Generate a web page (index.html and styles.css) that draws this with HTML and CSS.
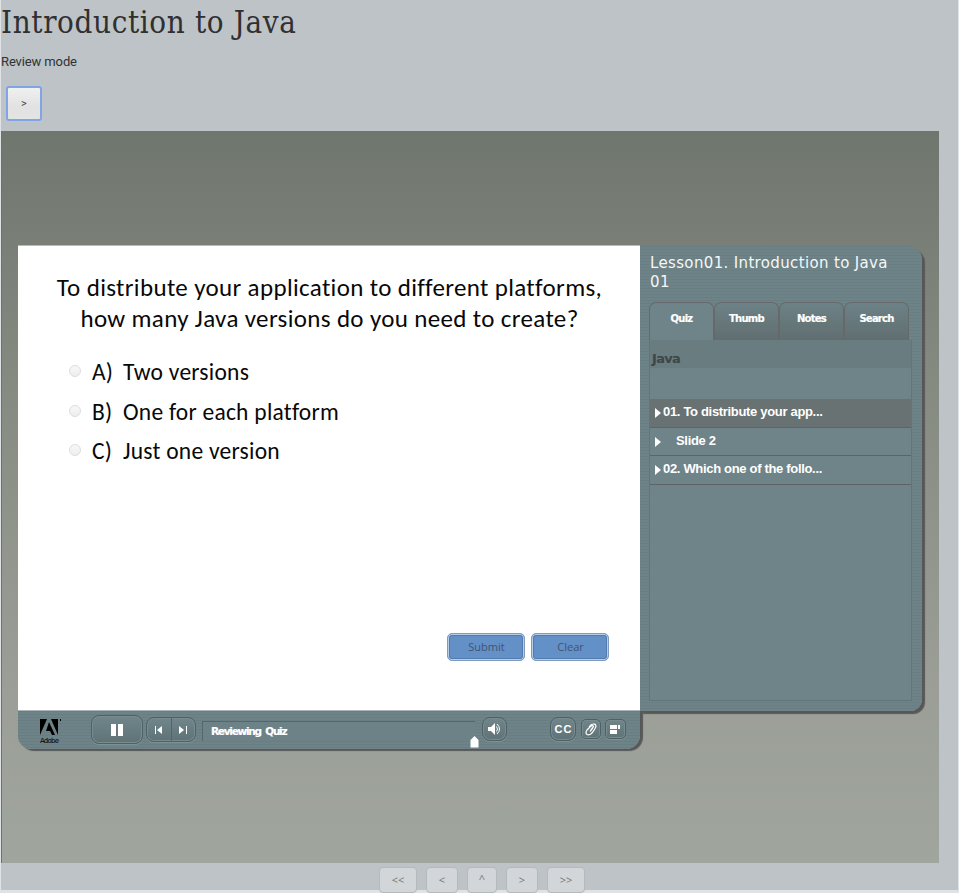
FILE: index.html
```html
<!DOCTYPE html>
<html lang="en">
<head>
<meta charset="utf-8">
<title>Introduction to Java</title>
<link rel="stylesheet" href="styles.css">
</head>
<body>
<main class="page">
  <h1><span>Introduction to Java</span></h1>
  <p class="mode">Review mode</p>
  <button class="next">&gt;</button>
  <section class="stage">
    <div class="player">
      <div class="lesson">
        <div class="slide">
          <h2>To distribute your application to different platforms,<br>how many Java versions do you need to create?</h2>
          <ul class="answers">
            <li><i class="radio"></i><span class="letter">A)</span><span>Two versions</span></li>
            <li><i class="radio"></i><span class="letter">B)</span><span>One for each platform</span></li>
            <li><i class="radio"></i><span class="letter">C)</span><span>Just one version</span></li>
          </ul>
          <div class="actions"><button>Submit</button><button>Clear</button></div>
        </div>
        <div class="controls">
          <div class="logo">
            <svg width="22" height="17" viewBox="0 0 22 17"><path d="M0 0h7L0 16zM11 0h7v16zM9 3l6 13h-3l-2-4H6z"/><path d="M20 0h1v2h-1z"/></svg>
            <span>Adobe</span>
          </div>
          <div class="ctl pause"><svg width="12" height="12"><path d="M0 0h5v12H0zM7 0h5v12H7z" fill="#fff"/></svg></div>
          <div class="ctl skip">
            <span><svg width="8" height="8"><path d="M0 0h1v8H0zM7 0v8L2 4z" fill="#fff"/></svg></span>
            <span><svg width="8" height="8"><path d="M7 0h1v8H7zM0 0v8l5-4z" fill="#fff"/></svg></span>
          </div>
          <div class="status"><span>Reviewing Quiz</span>
            <svg class="thumb" width="9" height="12"><path d="M4.500 0L8.500 4v7.500h-8V4z" fill="#fff"/></svg>
          </div>
          <div class="ctl sound"><svg width="14" height="13" viewBox="0 0 14 13"><path d="M0 4h3l4-4v12L3 8H0z" fill="#fff"/><path d="M8.500 3.500q2 2.500 0 5M9 1q5 5 0 10" fill="none" stroke="#fff"/></svg></div>
          <div class="ctl cc">CC</div>
          <div class="ctl clip"><svg width="12" height="13" viewBox="0 0 12 13" fill="none" stroke="#fff" stroke-width="1.200"><path d="M5 8.500L7.500 4.500M4 4L6.500 1.500Q10.500 0 11 3Q11 5 6.500 10.500Q4 12.500 2 11.500Q0 10 2 7L6 3Q8 2 8.500 3.500Q8 5 5 8.500"/></svg></div>
          <div class="ctl view"><svg width="11" height="9"><path d="M0 0h7v4H0zM8 0h2v4H8zM0 5h7v4H0z" fill="#fff"/></svg></div>
        </div>
      </div>
      <aside class="side">
        <h3>Lesson01. Introduction to Java<br>01</h3>
        <nav class="tabs"><span class="active">Quiz</span><span>Thumb</span><span>Notes</span><span>Search</span></nav>
        <div class="outline">
          <div class="topic">Java</div>
          <div class="row current"><i class="arrow"></i><span>01. To distribute your app...</span></div>
          <div class="row sub"><i class="arrow"></i><span>Slide 2</span></div>
          <div class="row third"><i class="arrow"></i><span>02. Which one of the follo...</span></div>
        </div>
      </aside>
    </div>
  </section>
  <nav class="pager"><span class="w">&lt;&lt;</span><span class="m">&lt;</span><span class="up">^</span><span class="m">&gt;</span><span class="w">&gt;&gt;</span></nav>
</main>
</body>
</html>
```
FILE: styles.css
```css
* { box-sizing: border-box; }
body { margin: 0; background: #dfe3e6; font-family: Roboto, sans-serif; color: #2f3336; overflow: hidden; }
svg { display: block; }
.page { width: 957px; height: 893px; margin-left: 1px; background: linear-gradient(#bdc3c7 890px, #dfe3e6 890px); overflow: hidden; }
h1 { margin: 0; height: 44px; font: 400 31px/44px "Roboto Slab", "DejaVu Serif Condensed", "DejaVu Serif", serif; font-stretch: condensed; white-space: nowrap; color: #303030; letter-spacing: .65px; }
.mode { margin: 9px 0 0; height: 17px; font-size: 13px; line-height: 17px; letter-spacing: -.12px; }
.next { display: block; width: 36px; height: 35px; margin: 16px 0 10px 5px; padding: 0; border: 2px solid #7fa5e3; border-radius: 3px; background: linear-gradient(#f0f0f0, #e2e2e2 60%, #e4e4e4); font: 11px Roboto, sans-serif; color: #444; }
.stage { width: 938px; height: 732px; padding: 115px 0 0 16px; border-left: 1px solid #69746b; background: linear-gradient(#6f766d, #868b82 35%, #9a9e96 75%, #a0a59d); }
.player { display: flex; align-items: flex-start; }
.lesson { width: 622px; border-radius: 0 0 14px 13px; box-shadow: 3px 2px 1px #575757; }
.slide { height: 465px; padding: 26px 0 0 1px; background: #fff; color: #080808; border-bottom: 1px solid #abb7b8; box-shadow: 0 -1px #babdb7; }
.slide h2 { margin: 0; font: 400 25px/31px Carlito, Lato, sans-serif; text-align: center; white-space: nowrap; letter-spacing: .35px; font-variant-ligatures: none; }
.answers { list-style: none; margin: 18px 0 0 50px; padding: 0; font: 23.500px/40px Carlito, Lato, sans-serif; letter-spacing: .25px; font-variant-ligatures: none; }
.answers li { display: flex; align-items: center; height: 39.700px; white-space: nowrap; }
.radio { width: 12px; height: 12px; border: 1px solid #ddd; border-radius: 50%; background: linear-gradient(#f8f8f8, #eee); margin: -2px 11px 0 0; }
.letter { width: 31px; }
.actions { display: flex; gap: 6px; margin: 162px 0 0 428px; }
.actions button { width: 78px; height: 28px; padding: 0 0 2px 1px; background: #6490c8; border: 1px solid #7f9cc0; border-radius: 5px; box-shadow: inset 0 0 0 1px #b7cde8, inset 0 0 0 2px #517bae; color: #41536d; font: 11px "Open Sans", sans-serif; }
.controls, .side { background: repeating-linear-gradient(#697e82 0 1px, #6e8387 1px 3px); }
.controls { display: flex; height: 38px; border-radius: 0 0 14px 13px; }
.logo { width: 22px; margin: 8px 0 0 22px; }
.logo span { display: block; font: 7px/10px "DejaVu Sans", sans-serif; color: #000; letter-spacing: -.8px; }
.ctl { display: flex; align-items: center; justify-content: center; border: 1px solid #4e6265; border-radius: 8px; background: linear-gradient(#71868a, #5f7377); box-shadow: inset 0 0 0 1px #788c90, 0 1px #7e9295; }
.pause { width: 52px; height: 29px; margin: 4px 0 0 29px; }
.skip { width: 50px; height: 25px; margin: 6px 0 0 3px; }
.skip span { flex: 1; height: 23px; display: flex; align-items: center; justify-content: center; }
.skip span + span { border-left: 1px solid #52666a; }
.status { position: relative; width: 273px; height: 20px; margin: 10px 0 0 6px; padding-left: 8px; border: solid #566669; border-width: 1px 0 0 1px; background: #6d8286; font: bold 10.500px/19px "DejaVu Sans", sans-serif; color: #fff; letter-spacing: -1.25px; word-spacing: 2px; -webkit-text-stroke: .2px #fff; }
.thumb { position: absolute; right: -4px; top: 14px; }
.sound { width: 25px; height: 24px; margin: 6px 0 0 7px; }
.cc { width: 26px; height: 24px; margin: 6px 0 0 43px; color: #fff; font: bold 11px "Liberation Sans", sans-serif; letter-spacing: 1px; padding-left: 1px; }
.clip { width: 20px; height: 20px; margin: 8px 0 0 5px; border-radius: 5px; }
.view { width: 21px; height: 20px; margin: 8px 0 0 4px; border-radius: 5px; }
.side { width: 282px; height: 465px; padding: 8px 11px 9px 9px; border-radius: 0 14px 12px 0; box-shadow: 3px 3px 1px #575757; }
.side h3 { margin: 0 0 0 1px; height: 48px; font: 400 15px/19px "DejaVu Sans", sans-serif; color: #f4f7f7; white-space: nowrap; letter-spacing: .35px; }
.tabs { display: flex; width: 261px; height: 38px; }
.tabs span { width: 65px; border: 1px solid #66696a; border-bottom: 0; border-radius: 7px 7px 0 0; background: linear-gradient(#6d8286, #606e71); color: #fff; font: bold 10px/32px "DejaVu Sans", sans-serif; text-align: center; letter-spacing: -.75px; -webkit-text-stroke: .2px #fff; }
.tabs .active { background: #6f8488; }
.outline { width: 263px; height: 361px; border: 1px solid #637579; border-top: 0; background: #6f8488; }
.topic { height: 28px; margin-bottom: 31px; padding-left: 2px; background: #697c7f; border-bottom: 1px solid #6a7c7e; color: #3f4647; font: bold 13px/38px "DejaVu Sans", sans-serif; letter-spacing: -.7px; }
.row { display: flex; height: 29px; padding-left: 5px; border-bottom: 1px solid #5d6465; color: #fff; font: bold 13px/25px "Liberation Sans", sans-serif; letter-spacing: -.32px; white-space: nowrap; }
.row.current { background: #687273; }
.row.sub { height: 28px; }
.arrow { width: 0; height: 0; margin: 9px 2px 0 0; border: solid transparent; border-width: 5.500px 0 5.500px 6px; border-left-color: #fff; }
.sub .arrow { margin-right: 15px; }
.pager { display: flex; align-items: flex-start; height: 30px; padding: 4px 0 0 378px; }
.pager span { height: 26px; border: 1px solid #b4b9bc; border-radius: 4px; background: #d2d6d9; color: #71777b; font: 11px/24px "Open Sans", sans-serif; text-align: center; }
.pager .w { width: 38px; }
.pager .m { width: 32px; margin: 0 9px; }
.pager .up { width: 30px; line-height: 21px; }
```
